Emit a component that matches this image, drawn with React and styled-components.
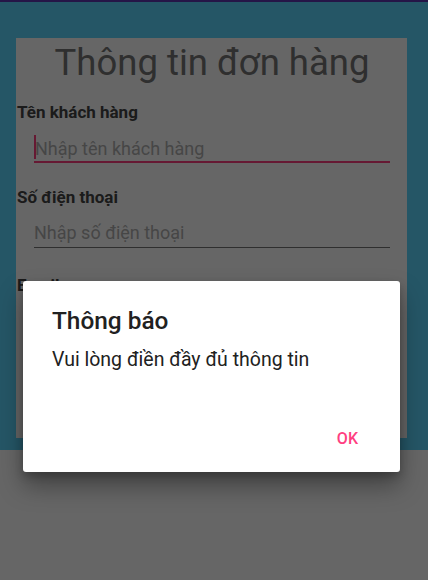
import React from "react";
import styled, { createGlobalStyle } from "styled-components";

const GlobalStyle = createGlobalStyle`
  html, body {
    margin: 0;
    padding: 0;
    background: #ffffff;
    font-family: Roboto, "Noto Sans", "Liberation Sans", sans-serif;
  }
`;

const Screen = styled.div`
  position: relative;
  width: 428px;
  height: 580px;
  overflow: hidden;
  display: flex;
  flex-direction: column;
  background: #ffffff;
`;

const StatusStrip = styled.div`
  height: 2px;
  background: #5e35b1;
`;

const Banner = styled.div`
  height: 448px;
  box-sizing: border-box;
  padding: 36px 21px 0 16px;
  background: rgb(92, 214, 255);
`;

const Card = styled.div`
  width: 391px;
  height: 400px;
  box-sizing: border-box;
  background: #ffffff;
  padding: 3.5px 0 0 1px;
  display: flex;
  flex-direction: column;
`;

const Title = styled.h1`
  margin: 0 0 18px;
  text-align: center;
  font-size: 36.5px;
  line-height: 42px;
  font-weight: 400;
  color: #757575;
`;

const Label = styled.div`
  font-size: 17px;
  line-height: 20px;
  font-weight: 700;
  color: #444444;
  margin-top: ${(p) => p.$gap}px;
`;

const Field = styled.div`
  margin: ${(p) => p.$gap}px 17px 0 17px;
  display: flex;
  align-items: flex-end;
  padding-bottom: ${(p) => (p.$focused ? 2 : 3.5)}px;
  border-bottom: ${(p) => (p.$focused ? "2px solid #ff4081" : "1px solid #757575")};
`;

const Caret = styled.span`
  width: 2px;
  height: 24.5px;
  margin: 0 -1px 0 0;
  background: #ff4081;
`;

const Placeholder = styled.span`
  font-size: 18px;
  line-height: 21px;
  color: #b0b0b0;
`;

const Scrim = styled.div`
  position: absolute;
  inset: 0;
  background: rgba(0, 0, 0, 0.6);
  padding: 281px 0 0 23px;
`;

const Dialog = styled.div`
  width: 377px;
  height: 191px;
  box-sizing: border-box;
  background: #ffffff;
  border-radius: 3px;
  box-shadow: 0 14px 24px rgba(0, 0, 0, 0.35), 0 4px 8px rgba(0, 0, 0, 0.2);
  padding: 26px 34px 24px 29px;
  display: flex;
  flex-direction: column;
`;

const DialogTitle = styled.div`
  font-size: 24.4px;
  line-height: 28px;
  font-weight: 500;
  color: #212121;
`;

const DialogText = styled.div`
  margin-top: 13px;
  font-size: 19.5px;
  line-height: 23px;
  color: #212121;
`;

const Actions = styled.div`
  margin-top: auto;
  display: flex;
  justify-content: flex-end;
`;

const TextButton = styled.button`
  border: none;
  background: none;
  padding: 0 8px;
  font-family: inherit;
  font-size: 16px;
  line-height: 19px;
  font-weight: 500;
  color: #ff4081;
`;

export default function App() {
  return (
    <>
      <GlobalStyle />
      <Screen>
        <StatusStrip />
        <Banner>
          <Card>
            <Title>Thông tin đơn hàng</Title>
            <Label $gap={0}>Tên khách hàng</Label>
            <Field $gap={13} $focused>
              <Caret />
              <Placeholder>Nhập tên khách hàng</Placeholder>
            </Field>
            <Label $gap={24}>Số điện thoại</Label>
            <Field $gap={15}>
              <Placeholder>Nhập số điện thoại</Placeholder>
            </Field>
            <Label $gap={27}>Email</Label>
          </Card>
        </Banner>
        <Scrim>
          <Dialog>
            <DialogTitle>Thông báo</DialogTitle>
            <DialogText>Vui lòng điền đầy đủ thông tin</DialogText>
            <Actions>
              <TextButton>OK</TextButton>
            </Actions>
          </Dialog>
        </Scrim>
      </Screen>
    </>
  );
}
